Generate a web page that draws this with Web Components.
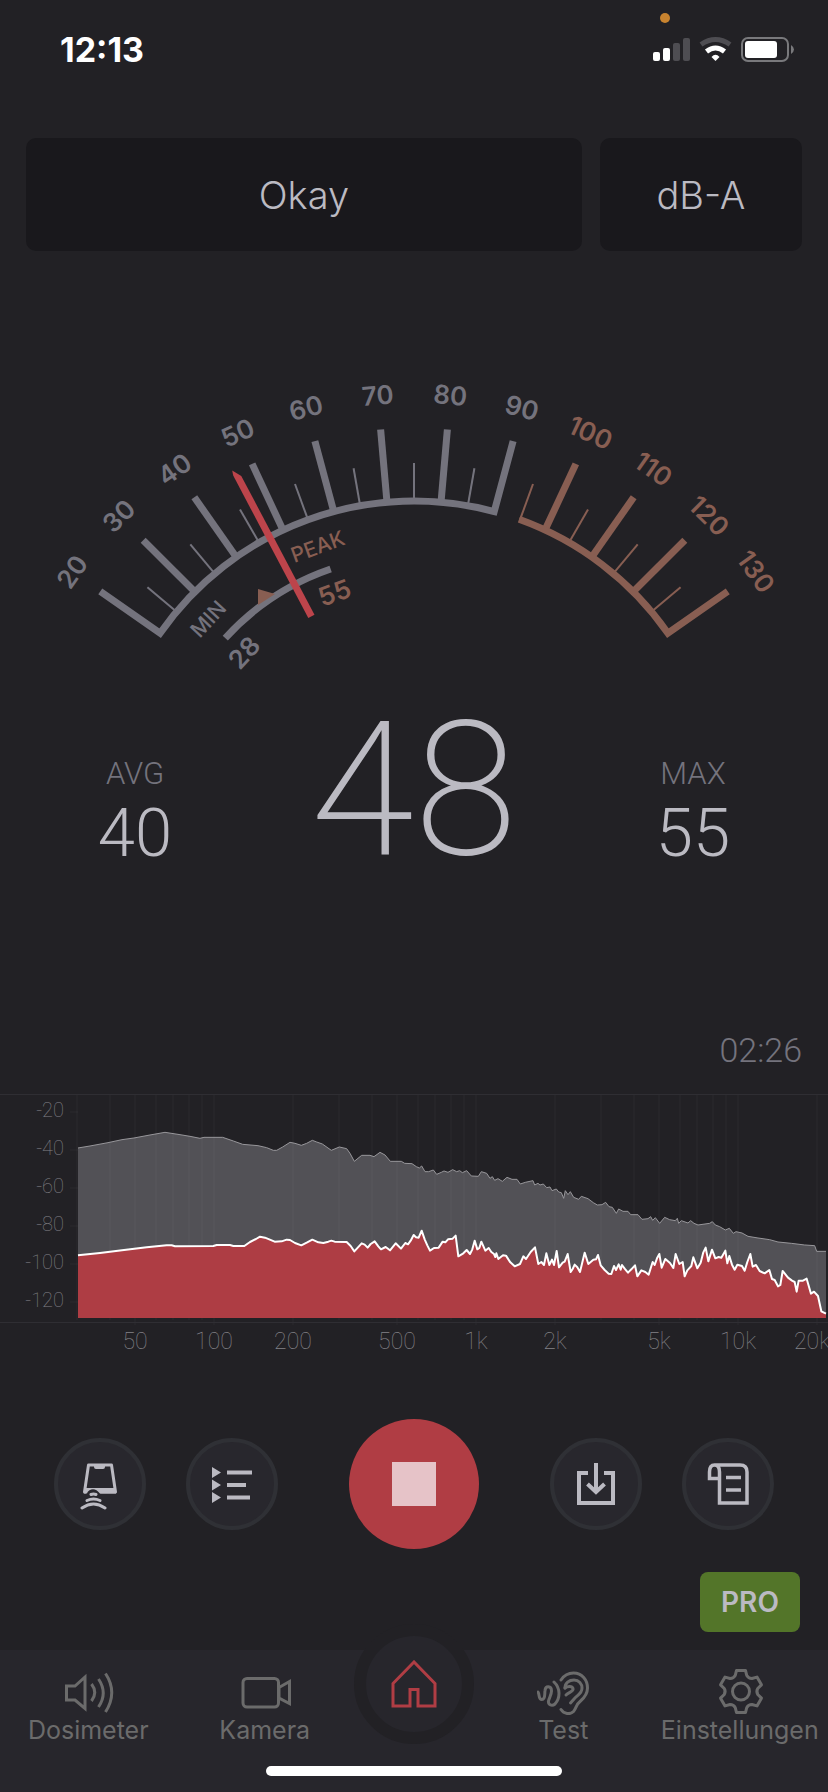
<!DOCTYPE html>
<html lang="de">
<head>
<meta charset="utf-8">
<meta name="viewport" content="width=device-width, initial-scale=1">
<title>Schallmesser</title>
<style>
  body {
    margin: 0;
    background: #222125;
    --bg: #222125;
    --panel: #27262c;
    --light: #bbbac2;
    --grey: #74737d;
    --dim: #6b6b6b;
    --brown: #885e52;
    --red: #b03d44;
    --round: Inter, "Liberation Sans", sans-serif;
    --thin: Roboto, "Liberation Sans", sans-serif;
    font-family: var(--round);
    color: var(--light);
  }
</style>
</head>
<body>
<noise-meter></noise-meter>

<script>
class BaseElement extends HTMLElement {
  constructor() {
    super();
    this.attachShadow({ mode: 'open' });
  }

  connectedCallback() {
    const template = document.createElement('template');
    template.innerHTML = this.render();
    this.shadowRoot.innerHTML = '';
    this.shadowRoot.appendChild(template.content.cloneNode(true));
  }
}

class StatusBar extends BaseElement {
  render() {
    return `
      <style>
        :host {
          display: flex;
          justify-content: space-between;
          height: 100px;
          padding: 0 28px 0 60px;
        }
        time {
          color: #fff;
          font-size: 34px;
          font-weight: 700;
          line-height: 100px;
        }
        svg { width: 160px; height: 100px; }
      </style>
      <time>12:13</time>
      <svg viewBox="0 0 160 100" aria-hidden="true">
        <circle cx="25" cy="18" r="5" fill="#c8832f"/>
        <g fill="#fff">
          <rect x="13" y="52" width="7" height="9" rx="2"/>
          <rect x="23" y="48" width="7" height="13" rx="2"/>
          <rect x="33" y="43" width="7" height="18" rx="2" fill="#4e4d52"/>
          <rect x="43" y="38" width="7" height="23" rx="2" fill="#4e4d52"/>
          <path d="M75.500 61 L71.500 57 Q75.500 52.500 79.500 57 Z"/>
          <rect x="105" y="41" width="32" height="17" rx="3"/>
        </g>
        <path d="M61 44.500 Q75.500 34.500 90 44.500" fill="none" stroke="#4e4d52" stroke-width="5"/>
        <path d="M66.500 51.500 Q75.500 44.500 84.500 51.500" fill="none" stroke="#fff" stroke-width="5"/>
        <rect x="102" y="38" width="46" height="23" rx="6" fill="none" stroke="#79797c" stroke-width="2"/>
        <path d="M151 45 Q154 47 154 49.500 Q154 52 151 54 Z" fill="#79797c"/>
      </svg>
    `;
  }
}
customElements.define('status-bar', StatusBar);

class ModeButton extends BaseElement {
  render() {
    return `
      <style>
        :host { display: block; }
        button {
          width: 100%;
          height: 113px;
          padding: 0;
          border: none;
          border-radius: 10px;
          background: #19181c;
          color: inherit;
          font: 300 38px/44px var(--round);
          cursor: pointer;
        }
      </style>
      <button type="button"><slot></slot></button>
    `;
  }
}
customElements.define('mode-button', ModeButton);

class LevelGauge extends BaseElement {
  // dial centre and radii, in viewBox units
  cx = 414;
  cy = 451;
  radius = 310;

  point(angle, r) {
    const a = angle * Math.PI / 180;
    return `${(this.cx + r * Math.sin(a)).toFixed(2)} ${(this.cy - r * Math.cos(a)).toFixed(2)}`;
  }

  // 10 dB are 10 degrees, 75 dB points straight up
  angleOf(db) {
    return db - 75;
  }

  ticks() {
    let out = '';
    for (let db = 20; db <= 130; db += 5) {
      const angle = this.angleOf(db);
      const big = db % 10 === 0;
      const cls = db > 90 ? 'hot' : 'cool';
      // the end ticks belong to the arc paths
      if (![20, 90, 95, 130].includes(db)) {
        out += `<path class="${cls}" stroke-width="${big ? 7 : 2}" d="M${this.point(angle, this.radius)} L${this.point(angle, big ? 383 : 348)}"/>`;
      }
      if (big) {
        out += this.label(db, angle, 417, cls, 26);
      }
    }
    return out;
  }

  label(text, angle, r, cls, size) {
    const y = this.cy - r + Math.round(size * 0.36);
    return `<text class="${cls}" font-size="${size}" x="${this.cx}" y="${y}" transform="rotate(${angle} ${this.cx} ${this.cy})">${text}</text>`;
  }

  render() {
    const r = this.radius;
    const p = (a, rr) => this.point(a, rr);
    return `
      <style>
        :host { display: block; }
        svg { display: block; width: 100%; }
        path.cool { stroke: var(--grey); }
        path.hot { stroke: var(--brown); }
        text {
          font-family: var(--round);
          font-weight: 600;
          text-anchor: middle;
        }
        text.cool { fill: var(--grey); }
        text.hot { fill: var(--brown); }
        text.small { font-weight: 500; }
      </style>
      <svg viewBox="0 0 828 330" fill="none">
        ${this.ticks()}
        <path class="cool" stroke-width="7" d="M${p(-55, 383)} L${p(-55, r)} A${r} ${r} 0 0 1 ${p(15, r)} L${p(15, 383)}"/>
        <path class="hot" stroke-width="7" d="M${p(19.8, r)} A${r} ${r} 0 0 1 ${p(55, r)} L${p(55, 383)}"/>
        <path class="hot" stroke-width="2" d="M${p(20, r)} L${p(20, 348)}"/>
        <path class="cool" stroke-width="7" d="M${p(-47.5, 256)} A256 256 0 0 1 ${p(-19, 256)}"/>
        <path fill="var(--brown)" d="M258 229 L275 234 L258 245 Z"/>
        ${this.label('MIN', -47, 282, 'cool small', 21)}
        ${this.label('PEAK', -20, 282, 'hot small', 21)}
        ${this.label('28', -47, 232, 'cool', 26)}
        ${this.label('55', -20, 232, 'hot', 26)}
        <path fill="#bd444b" transform="rotate(-27.8 414 451)" d="M410.500 231 V70 L412 65 L417.500 74 V231 Z"/>
      </svg>
    `;
  }
}
customElements.define('level-gauge', LevelGauge);

class LevelReading extends BaseElement {
  render() {
    return `
      <style>
        :host {
          display: flex;
          flex-direction: column;
          align-items: center;
          gap: 23px;
          font-family: var(--thin);
          font-weight: 300;
        }
        .name {
          color: var(--grey);
          font-size: 31px;
          line-height: 22px;
        }
        .value {
          font-size: 67px;
          line-height: 50px;
        }
        :host([large]) .name { display: none; }
        :host([large]) .value {
          font-size: 188px;
          font-weight: 200;
          line-height: 136px;
        }
      </style>
      <span class="name"><slot name="name"></slot></span>
      <span class="value"><slot></slot></span>
    `;
  }
}
customElements.define('level-reading', LevelReading);

// traces in thirds of a pixel
const MAX_TRACE = `234,414 270,408 324,398 366,389 402,384 450,375 495,367 540,374 570,379 600,385 612,382 668,382
700,393 728,403 774,407 800,413 820,421 830,421 848,411 870,397 885,400 904,406 920,400 937,391 950,396 967,402
984,414 994,421 1018,411 1040,416 1050,430 1063,454 1085,436 1110,436 1122,440 1140,427 1155,435 1171,454 1204,454
1214,460 1236,461 1249,470 1258,474 1265,468 1275,485 1286,485 1300,480 1310,493 1324,487 1332,483 1344,487
1358,479 1370,485 1379,482 1387,488 1400,482 1414,498 1435,499 1444,485 1460,490 1470,505 1477,500 1484,511
1494,506 1507,514 1521,502 1536,508 1551,508 1561,522 1576,517 1599,512 1604,525 1614,520 1620,525 1630,522
1640,533 1650,531 1656,542 1669,537 1676,546 1684,548 1691,565 1696,542 1704,554 1711,545 1721,562 1736,568
1744,559 1764,566 1780,578 1792,585 1806,584 1817,577 1827,590 1837,592 1849,610 1856,597 1869,604 1884,604
1892,614 1914,614 1926,628 1944,626 1952,620 1958,631 1966,623 1979,640 1994,622 2009,629 2026,632 2032,625
2036,640 2044,632 2064,639 2072,632 2082,640 2094,645 2129,640 2137,635 2146,645 2159,650 2176,660 2188,655
2200,670 2208,665 2226,669 2244,679 2274,684 2309,689 2334,696 2374,700 2414,705 2444,707 2450,724 2478,724`;

const LIVE_TRACE = `234,736 300,729 366,721 440,712 500,706 515,706 525,709 640,708 650,705 690,705 700,708 733,708
750,696 768,687 780,680 795,683 824,695 845,694 860,689 870,690 885,699 904,706 920,698 937,689 955,697 970,699
985,695 994,692 1004,695 1040,696 1052,708 1063,724 1085,700 1094,704 1103,713 1112,702 1124,694 1135,709
1143,718 1157,711 1170,721 1187,700 1203,716 1216,699 1224,703 1232,692 1241,675 1248,682 1256,683 1265,662
1274,688 1282,706 1290,722 1302,714 1316,713 1328,695 1336,697 1344,688 1358,686 1367,677 1375,739 1390,730
1400,720 1410,732 1417,718 1424,692 1432,718 1438,714 1444,695 1456,722 1466,714 1474,726 1482,732 1486,741
1489,730 1495,747 1509,736 1518,737 1531,757 1544,769 1560,762 1570,739 1578,747 1592,726 1605,712 1615,762
1624,756 1632,765 1639,730 1648,765 1656,749 1662,765 1670,723 1677,772 1688,758 1694,755 1703,732 1712,786
1718,777 1724,764 1732,772 1740,786 1754,728 1765,762 1780,749 1788,748 1794,735 1802,766 1814,780 1826,791
1834,792 1842,768 1848,780 1856,763 1862,779 1866,765 1874,776 1884,788 1894,778 1905,766 1912,799 1924,781
1936,786 1946,794 1958,756 1964,765 1971,745 1978,732 1985,773 1996,747 2010,759 2020,774 2027,732 2038,762
2048,756 2054,799 2062,781 2074,768 2080,742 2092,775 2102,758 2110,727 2117,713 2125,754 2136,719 2146,745
2156,741 2164,743 2176,722 2182,760 2188,738 2196,764 2204,779 2212,764 2226,768 2234,782 2242,756 2251,732
2258,770 2268,765 2279,783 2294,790 2308,780 2316,807 2324,810 2334,829 2341,825 2348,783 2364,803 2376,812
2384,816 2390,845 2396,812 2409,812 2420,806 2433,851 2442,845 2454,858 2464,904 2478,911`;

class SpectrumChart extends BaseElement {
  xOf(freq) {
    return Math.round(214 + 262 * Math.log10(freq / 100));
  }

  grid() {
    const named = [50, 100, 200, 500, 1000, 2000, 5000, 10000, 20000];
    let out = '';
    for (const decade of [10, 100, 1000, 10000]) {
      for (let i = 1; i < 10; i++) {
        const f = decade * i;
        if (f < 30 || f > 20000) continue;
        out += `<path d="M${this.xOf(f)} 0 V${named.includes(f) ? 231 : 226}"/>`;
      }
    }
    for (let i = 0; i < 6; i++) {
      out += `<path d="M70 ${18 + i * 38} H78"/>`;
    }
    return out;
  }

  labels() {
    const freqs = { 50: '50', 100: '100', 200: '200', 500: '500', 1000: '1k', 2000: '2k', 5000: '5k', 10000: '10k', 20000: '20k' };
    let out = '';
    for (const f in freqs) {
      // the last label is pulled in from the edge
      const x = f === '20000' ? 812 : this.xOf(f);
      out += `<text class="freq" x="${x}" y="255">${freqs[f]}</text>`;
    }
    for (let i = 0; i < 6; i++) {
      out += `<text class="db" x="64" y="${23 + i * 38}">${-20 - i * 20}</text>`;
    }
    return out;
  }

  render() {
    return `
      <style>
        :host { display: block; }
        svg { display: block; width: 100%; }
        text {
          fill: #828187;
          font-family: var(--thin);
          font-weight: 100;
        }
        .freq { font-size: 23px; text-anchor: middle; }
        .db { font-size: 20px; text-anchor: end; }
      </style>
      <svg viewBox="0 0 828 266" fill="none">
        <g transform="translate(0 -84) scale(0.33333)" stroke-linejoin="round">
          <path fill="#525156" d="M234,924 L${MAX_TRACE} L2478,924 Z"/>
          <polyline stroke="#98979b" stroke-width="3" points="${MAX_TRACE}"/>
        </g>
        <g stroke="#fff" stroke-opacity="0.02" stroke-width="2">${this.grid()}</g>
        <g transform="translate(0 -84) scale(0.33333)" stroke-linejoin="round">
          <path fill="#ae3d44" d="M234,924 L${LIVE_TRACE} L2478,924 Z"/>
          <polyline stroke="#fff" stroke-width="6" points="${LIVE_TRACE}"/>
        </g>
        <path stroke="#2f2e33" d="M0 0.500 H828 M0 228.500 H828"/>
        ${this.labels()}
      </svg>
    `;
  }
}
customElements.define('spectrum-chart', SpectrumChart);

class RoundButton extends BaseElement {
  render() {
    return `
      <style>
        :host { display: block; }
        button {
          display: grid;
          place-items: center;
          box-sizing: border-box;
          width: 92px;
          height: 92px;
          padding: 0;
          border: 4px solid #2f3035;
          border-radius: 50%;
          background: #28272d;
          color: var(--light);
          cursor: pointer;
        }
        :host([record]) button {
          width: 130px;
          height: 130px;
          border: none;
          background: var(--red);
          color: #e6c3c8;
        }
      </style>
      <button type="button" aria-label="${this.getAttribute('label')}"><slot></slot></button>
    `;
  }
}
customElements.define('round-button', RoundButton);

class TabItem extends BaseElement {
  render() {
    return `
      <style>
        :host { display: block; }
        a {
          display: flex;
          flex-direction: column;
          align-items: center;
          color: var(--dim);
          font-size: 25px;
          font-weight: 400;
          line-height: 28px;
          text-decoration: none;
        }
        ::slotted(svg) {
          width: 52px;
          height: 48px;
          margin-bottom: 1px;
        }
        :host([home]) { margin-top: -43px; }
        :host([home]) a {
          justify-content: center;
          box-sizing: border-box;
          width: 120px;
          height: 120px;
          margin: 0 auto;
          border: 12px solid var(--bg);
          border-radius: 50%;
          background: var(--panel);
          color: var(--red);
        }
      </style>
      <a href="#${this.getAttribute('to')}" aria-label="${this.getAttribute('to')}"><slot name="icon"></slot><slot></slot></a>
    `;
  }
}
customElements.define('tab-item', TabItem);

class TabBar extends BaseElement {
  gear() {
    const pt = (r, deg) => {
      const a = deg * Math.PI / 180;
      return `${(1 + r * Math.sin(a)).toFixed(2)} ${(24.5 - r * Math.cos(a)).toFixed(2)}`;
    };
    let d = '';
    for (let a = 0; a < 360; a += 60) {
      d += `${a ? 'L' : 'M'}${pt(21.5, a - 12)} L${pt(21.5, a + 12)} L${pt(17, a + 20)} Q${pt(15, a + 30)} ${pt(17, a + 40)} `;
    }
    return d + 'Z';
  }

  render() {
    return `
      <style>
        :host {
          display: block;
          height: 142px;
          background: var(--panel);
        }
        nav {
          display: grid;
          grid-template-columns: 1fr 1fr 122px 1fr 1fr;
          height: 99px;
          padding-top: 17px;
        }
        .indicator {
          width: 296px;
          height: 10px;
          margin: 0 auto;
          border-radius: 5px;
          background: #fff;
        }
        svg {
          fill: none;
          stroke: currentColor;
          stroke-width: 3;
        }
      </style>
      <nav>
        <tab-item to="Dosimeter">
          <svg slot="icon" viewBox="-26 0 52 48">
            <path d="M-21.500 19 V33 H-13 L-3 41.500 V10 L-13 19 Z"/>
            <path d="M3.500 17 Q10 25.500 3.500 34 M10.500 12 Q20 26 10.500 40 M17.500 6.500 Q30 25.500 17.500 45"/>
          </svg>
          Dosimeter
        </tab-item>
        <tab-item to="Kamera">
          <svg slot="icon" viewBox="-26 0 52 48">
            <rect x="-22" y="11.500" width="35.500" height="28.500" rx="4"/>
            <path d="M14 20.500 L24.500 14.500 V36.500 L14 31 Z"/>
          </svg>
          Kamera
        </tab-item>
        <tab-item home to="Home">
          <svg slot="icon" viewBox="-26 0 52 48">
            <path d="M0 2 L-21 23.500 V46 H-4 V29.500 H4 V46 H21 V23.500 Z"/>
          </svg>
        </tab-item>
        <tab-item to="Test">
          <svg slot="icon" viewBox="-26 0 52 48" stroke-linecap="round" stroke-linejoin="round">
            <path d="M-2 13 C1 8.500 6 6 10.500 6 C19 6 24.500 13 24.500 21 C24.500 27 21 31 17.500 34 C13 37.500 13.500 41 10.500 44.500 C7 48 1 47 -2 42.500"/>
            <path d="M2 21 C2 16 6 13 11 13 C16 13 19 17 19 21 C19 27 14 28 11.500 31.500 L7.500 36"/>
            <path d="M2 21 C4 19.500 9 18.500 10 21.500 C11 24.500 6 25 3 28"/>
            <path d="M-9 15 C-2.500 21 -2.500 31 -8 37 C-11 39.500 -15 38 -14.500 34 C-14 31 -11.500 28 -11.500 24 C-11.500 18.500 -17.500 18.500 -18 23.500 C-18.500 27 -17.500 32.500 -21 32.500 C-25 32.500 -23 28 -25 25"/>
          </svg>
          Test
        </tab-item>
        <tab-item to="Einstellungen">
          <svg slot="icon" viewBox="-26 0 52 48" stroke-linejoin="round">
            <path d="${this.gear()}"/>
            <circle cx="1" cy="24.500" r="8.500"/>
          </svg>
          Einstellungen
        </tab-item>
      </nav>
      <div class="indicator"></div>
    `;
  }
}
customElements.define('tab-bar', TabBar);

class NoiseMeter extends BaseElement {
  render() {
    return `
      <style>
        :host {
          display: flex;
          flex-direction: column;
          min-height: 100vh;
        }
        .modes {
          display: grid;
          grid-template-columns: 11fr 4fr;
          gap: 18px;
          padding: 38px 26px 0;
        }
        level-gauge { margin-top: 109px; }
        .readings {
          display: grid;
          grid-template-columns: 15fr 16fr 15fr;
          align-items: end;
          margin-top: 32px;
        }
        .elapsed {
          margin: 172px 26px 24px;
          color: var(--grey);
          font: 300 34px/40px var(--thin);
          text-align: right;
        }
        .controls {
          display: flex;
          justify-content: space-between;
          align-items: center;
          margin-top: 59px;
          padding: 0 54px;
        }
        .pair {
          display: flex;
          gap: 40px;
        }
        .controls svg {
          width: 52px;
          height: 52px;
          fill: none;
          stroke: currentColor;
          stroke-width: 4;
        }
        .pro {
          align-self: flex-end;
          width: 100px;
          height: 60px;
          margin: 23px 28px 18px;
          padding: 0;
          border: none;
          border-radius: 8px;
          background: #537529;
          color: var(--light);
          font: 600 28px/32px var(--round);
          cursor: pointer;
        }
        tab-bar { margin-top: auto; }
      </style>
      <status-bar></status-bar>
      <div class="modes">
        <mode-button>Okay</mode-button>
        <mode-button>dB-A</mode-button>
      </div>
      <level-gauge></level-gauge>
      <div class="readings">
        <level-reading><span slot="name">AVG</span>40</level-reading>
        <level-reading large>48</level-reading>
        <level-reading><span slot="name">MAX</span>55</level-reading>
      </div>
      <div class="elapsed">02:26</div>
      <spectrum-chart></spectrum-chart>
      <div class="controls">
        <div class="pair">
          <round-button label="Vibration">
            <svg viewBox="-26 -26 52 52" stroke-linejoin="round" stroke-linecap="round">
              <path stroke-width="3" d="M-14 8 H-15.500 L-11.500 -19 H11.500 L15.500 8 H1"/>
              <path stroke="none" fill="currentColor" d="M-6 -19 H5 V-17 Q5 -15 3 -15 H-4 Q-6 -15 -6 -17 Z M-16 4 H16 V9.500 H0 Q-7 1 -14 9.500 H-16 Z"/>
              <path stroke-width="3" d="M-9 10.500 Q-6.500 9.500 -4 10.500 M-13 16.500 Q-6.500 13.500 0 16.500 M-18 24 Q-6.500 16 5 24"/>
            </svg>
          </round-button>
          <round-button label="Liste">
            <svg viewBox="-26 -26 52 52">
              <path stroke="none" fill="currentColor" d="M-20 -17 L-11 -11.500 L-20 -6 Z M-20 -4.500 L-11 1 L-20 6.500 Z M-20 8 L-11 13.500 L-20 19 Z"/>
              <path d="M-5 -11.500 H20 M-5 1 H14 M-5 13.500 H18"/>
            </svg>
          </round-button>
        </div>
        <round-button record label="Stopp">
          <svg viewBox="-26 -26 52 52"><rect x="-22" y="-22" width="44" height="44" fill="currentColor" stroke="none"/></svg>
        </round-button>
        <div class="pair">
          <round-button label="Speichern">
            <svg viewBox="-26 -26 52 52">
              <path d="M-8 -11 H-17 V19 H17 V-11 H8 M0 -21 V8 M-8.500 0 L0 8 L8.500 0"/>
            </svg>
          </round-button>
          <round-button label="Protokoll">
            <svg viewBox="-26 -26 52 52">
              <path stroke-width="3.500" d="M-8.500 -5.500 H-18.500 V-12 C-18.500 -16 -17 -19 -13.500 -19 C-10 -19 -8.500 -16 -8.500 -12 V19 H19 V-12 C19 -16 17 -19 12 -19 H-13.500 M-2 -6.500 H13 M-2 6 H13"/>
            </svg>
          </round-button>
        </div>
      </div>
      <button class="pro" type="button">PRO</button>
      <tab-bar></tab-bar>
    `;
  }
}
customElements.define('noise-meter', NoiseMeter);
</script>
</body>
</html>
